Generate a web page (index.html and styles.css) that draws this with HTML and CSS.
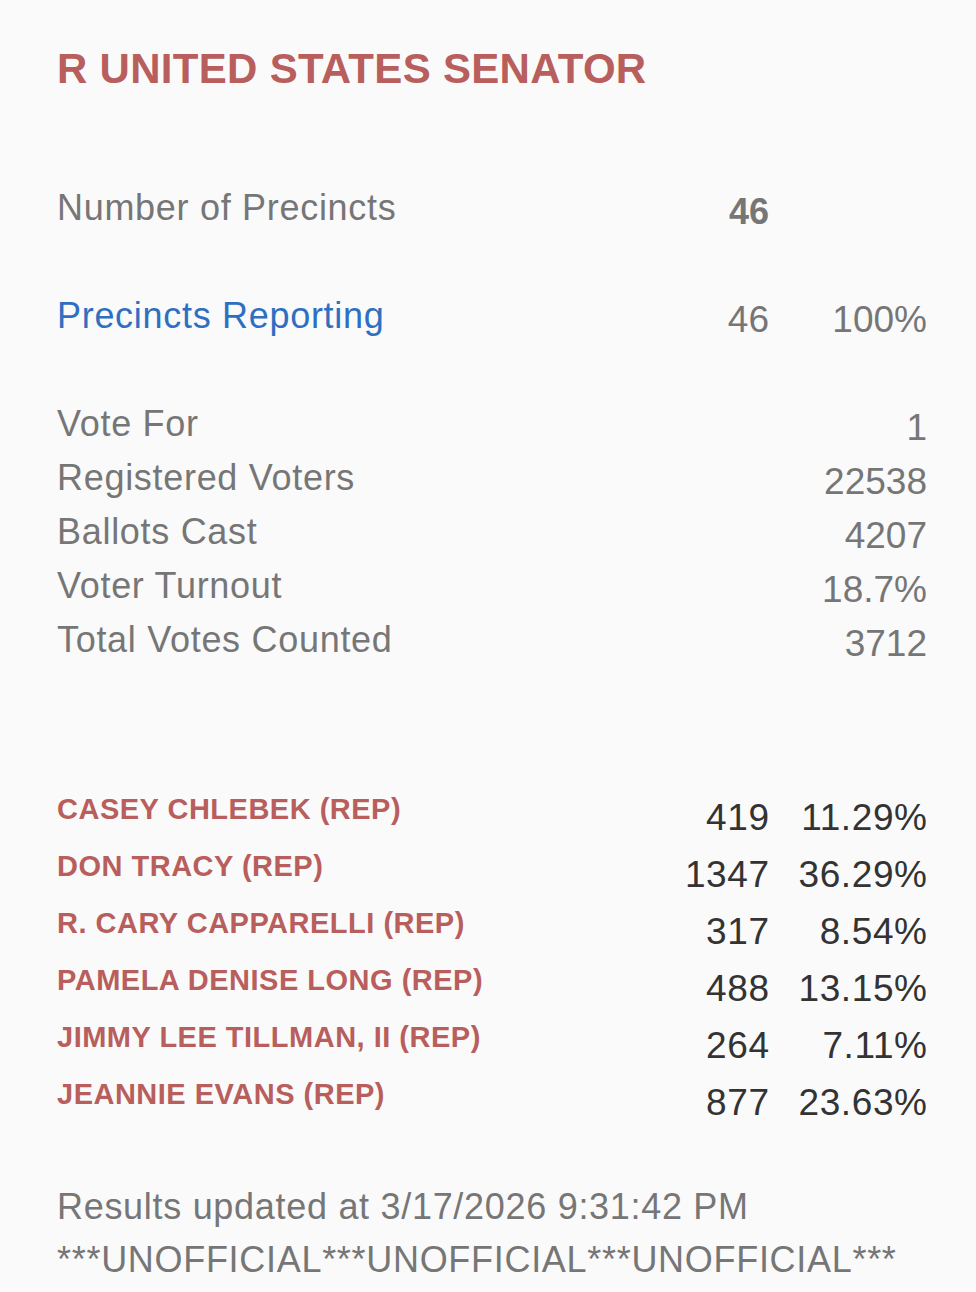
FILE: index.html
```html
<!DOCTYPE html>
<html lang="en">
<head>
<meta charset="utf-8">
<title>R United States Senator</title>
<link rel="stylesheet" href="styles.css">
</head>
<body>
<main class="page">
  <h1 class="title">R UNITED STATES SENATOR</h1>

  <section class="stats">
    <div class="row">
      <span class="label">Number of Precincts</span>
      <span class="val bold">46</span>
      <span class="pct"></span>
    </div>
    <div class="row gap">
      <span class="label link">Precincts Reporting</span>
      <span class="val">46</span>
      <span class="pct">100%</span>
    </div>
    <div class="row gap">
      <span class="label">Vote For</span>
      <span class="val wide">1</span>
    </div>
    <div class="row">
      <span class="label">Registered Voters</span>
      <span class="val wide">22538</span>
    </div>
    <div class="row">
      <span class="label">Ballots Cast</span>
      <span class="val wide">4207</span>
    </div>
    <div class="row">
      <span class="label">Voter Turnout</span>
      <span class="val wide">18.7%</span>
    </div>
    <div class="row">
      <span class="label">Total Votes Counted</span>
      <span class="val wide">3712</span>
    </div>
  </section>

  <section class="cands">
    <div class="cand">
      <span class="name">CASEY CHLEBEK (REP)</span>
      <span class="num">419</span>
      <span class="num">11.29%</span>
    </div>
    <div class="cand">
      <span class="name">DON TRACY (REP)</span>
      <span class="num">1347</span>
      <span class="num">36.29%</span>
    </div>
    <div class="cand">
      <span class="name">R. CARY CAPPARELLI (REP)</span>
      <span class="num">317</span>
      <span class="num">8.54%</span>
    </div>
    <div class="cand">
      <span class="name">PAMELA DENISE LONG (REP)</span>
      <span class="num">488</span>
      <span class="num">13.15%</span>
    </div>
    <div class="cand">
      <span class="name">JIMMY LEE TILLMAN, II (REP)</span>
      <span class="num">264</span>
      <span class="num">7.11%</span>
    </div>
    <div class="cand">
      <span class="name">JEANNIE EVANS (REP)</span>
      <span class="num">877</span>
      <span class="num">23.63%</span>
    </div>
  </section>

  <footer class="foot">
    <p>Results updated at 3/17/2026 9:31:42 PM</p>
    <p>***UNOFFICIAL***UNOFFICIAL***UNOFFICIAL***</p>
  </footer>
</main>
</body>
</html>
```

FILE: styles.css
```css
html, body {
  margin: 0;
  padding: 0;
  background: #fafafa;
}

body {
  font-family: "Liberation Sans", Arial, Helvetica, sans-serif;
  color: #767676;
}

.page {
  padding: 45px 49px 0 57px;
}

.title {
  margin: 0;
  font-size: 42px;
  line-height: 48px;
  font-weight: 700;
  letter-spacing: 0.3px;
  color: #b85e5c;
}

.stats {
  margin-top: 88px;
}

.row {
  display: grid;
  grid-template-columns: 1fr 120px 158px;
  height: 54px;
  line-height: 54px;
}

.row.gap {
  margin-top: 54px;
}

.label {
  font-size: 36px;
  letter-spacing: 0.7px;
  color: #767676;
  white-space: nowrap;
}

.label.link {
  color: #2f6fc1;
}

.val,
.pct {
  font-size: 37px;
  text-align: right;
  padding-top: 4px;
  color: #767676;
}

.val.bold {
  font-weight: 700;
  font-size: 36px;
}

.val.wide {
  grid-column: 2 / 4;
}

.cands {
  margin-top: 125px;
}

.cand {
  display: grid;
  grid-template-columns: 1fr 120px 158px;
  height: 57px;
  align-items: start;
}

.name {
  font-size: 29px;
  line-height: 34px;
  font-weight: 700;
  letter-spacing: 0.5px;
  color: #b85e5c;
  white-space: nowrap;
}

.num {
  font-size: 37px;
  line-height: 52px;
  text-align: right;
  letter-spacing: 0.6px;
  margin-right: -0.6px;
  color: #333333;
}

.foot {
  margin-top: 46px;
}

.foot p {
  margin: 0;
  font-size: 36px;
  line-height: 53px;
  letter-spacing: 0.7px;
  color: #767676;
  white-space: nowrap;
}
```
